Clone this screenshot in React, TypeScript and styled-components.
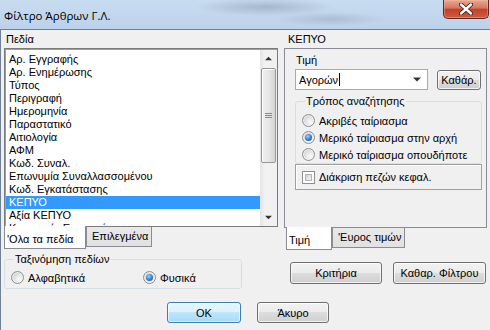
import React from "react";
import styled, { createGlobalStyle, css } from "styled-components";

const GlobalStyle = createGlobalStyle`
  html, body { margin: 0; padding: 0; }
  body {
    background: #f0f0f0;
    font-family: "Liberation Sans", Arial, sans-serif;
    font-size: 11px;
    color: #000;
  }
  * { box-sizing: border-box; }
`;

const Window = styled.div`
  width: 490px;
  height: 330px;
  overflow: hidden;
  display: flex;
  flex-direction: column;
  background: #f0f0f0;
`;

const TitleBar = styled.div`
  height: 29px;
  flex: none;
  display: flex;
  justify-content: space-between;
  align-items: flex-start;
  background:
    radial-gradient(ellipse 70px 9px at 265px 7px, rgba(95, 105, 120, 0.3), transparent),
    radial-gradient(ellipse 55px 7px at 330px 19px, rgba(95, 105, 120, 0.22), transparent),
    linear-gradient(#c8dcf1, #bcd2ea);
`;

const TitleText = styled.div`
  font-family: "Open Sans", "Noto Sans", sans-serif;
  font-size: 11.5px;
  line-height: 31px;
  padding-left: 4px;
  color: #000;
`;

const CloseButton = styled.div`
  width: 46px;
  height: 19px;
  margin-right: 1px;
  border: 1px solid #5a2a22;
  border-top: none;
  border-radius: 0 0 5px 5px;
  background: linear-gradient(#e8a892 0%, #d8745c 45%, #c2412a 52%, #cf5b3f 100%);
  box-shadow: inset 0 0 0 1px rgba(255, 200, 180, 0.35);
  display: flex;
  align-items: center;
  justify-content: center;
`;

const Client = styled.div`
  flex: 1;
  border-top: 1px solid #6f8195;
  border-left: 1px solid #6f8195;
  padding: 0 2px 0 3px;
  display: flex;
  flex-direction: column;
`;

const TopRow = styled.div`
  display: flex;
`;

const Column = styled.div<{ $width: number; $gap?: number }>`
  width: ${(p) => p.$width}px;
  margin-left: ${(p) => p.$gap ?? 0}px;
  display: flex;
  flex-direction: column;
`;

const PaneLabel = styled.div<{ $indent: number }>`
  height: 18px;
  line-height: 19px;
  padding-left: ${(p) => p.$indent}px;
`;

const ListBox = styled.div`
  height: 179px;
  border: 1px solid #7a7a7a;
  box-shadow: inset 1px 1px 0 #a0a0a0;
  background: #fff;
  display: flex;
`;

const Items = styled.div`
  flex: 1;
  padding: 4px 0 0 1px;
  overflow: hidden;
`;

const ListItem = styled.div<{ $selected?: boolean }>`
  height: 13px;
  line-height: 13px;
  padding-left: 3px;
  white-space: nowrap;
  ${(p) =>
    p.$selected &&
    css`
      background: #3399ff;
      color: #fff;
    `}
`;

const ScrollBar = styled.div`
  width: 17px;
  margin: 1px 0 0 0;
  background: linear-gradient(90deg, #e3e3e3, #f2f2f2 30%, #f0f0f0);
  display: flex;
  flex-direction: column;
  align-items: center;
`;

const ScrollArrow = styled.div`
  height: 17px;
  width: 17px;
  display: flex;
  align-items: center;
  justify-content: center;
`;

const ScrollThumb = styled.div`
  width: 15px;
  height: 95px;
  margin-top: 1px;
  border: 1px solid #979797;
  border-radius: 2px;
  background: linear-gradient(90deg, #f1f1f1, #e5e5e5 50%, #d6d6d6);
  box-shadow: inset 1px 1px 0 #fff;
  display: flex;
  align-items: center;
  justify-content: center;
`;

const ScrollTrack = styled.div`
  flex: 1;
`;

const TabStrip = styled.div<{ $indent?: number }>`
  display: flex;
  align-items: flex-start;
  padding-left: ${(p) => p.$indent ?? 0}px;
  margin-top: -1px;
`;

const Tab = styled.div<{ $active?: boolean; $width: number }>`
  width: ${(p) => p.$width}px;
  border: 1px solid #898c95;
  border-top: none;
  white-space: nowrap;
  ${(p) =>
    p.$active
      ? css`
          height: 23px;
          background: #fff;
          padding: 7px 0 0 2px;
        `
      : css`
          height: 20px;
          margin-top: 1px;
          background: linear-gradient(#e9e9e9, #e1e1e1);
          padding: 3px 0 0 5px;
        `}
`;

const Panel = styled.div`
  height: 180px;
  border: 1px solid #898c95;
  padding: 4px 4px 0 10px;
  display: flex;
  flex-direction: column;
`;

const FieldLabel = styled.div`
  height: 14px;
  line-height: 14px;
  padding-left: 1px;
`;

const ComboRow = styled.div`
  display: flex;
  align-items: center;
  gap: 9px;
  margin-top: 2px;
`;

const ComboBox = styled.div`
  width: 133px;
  height: 21px;
  border: 1px solid #7eb4ea;
  background: #fff;
  display: flex;
  align-items: center;
  padding: 0 6px 0 3px;
`;

const ComboText = styled.span`
  flex: 1;
  display: flex;
  align-items: center;
`;

const Caret = styled.span`
  display: inline-block;
  width: 1px;
  height: 13px;
  background: #000;
  margin-left: 1px;
`;

const Button = styled.div<{ $width: number; $height?: number; $primary?: boolean }>`
  width: ${(p) => p.$width}px;
  height: ${(p) => p.$height ?? 21}px;
  border-radius: 3px;
  display: flex;
  align-items: center;
  justify-content: center;
  white-space: nowrap;
  ${(p) =>
    p.$primary
      ? css`
          border: 1px solid #3c7fb1;
          background: linear-gradient(#eaf6fd 0%, #d9f0fc 49%, #bee6fd 50%, #a7d9f5 100%);
          box-shadow: inset 0 0 0 1px rgba(255, 255, 255, 0.6);
        `
      : css`
          border: 1px solid #707070;
          background: linear-gradient(#f2f2f2 0%, #ebebeb 49%, #dddddd 50%, #cfcfcf 100%);
          box-shadow: inset 0 0 0 1px rgba(255, 255, 255, 0.7);
        `}
`;

const GroupBox = styled.fieldset<{ $width: number; $top: number; $padTop: number; $padBottom: number }>`
  width: ${(p) => p.$width}px;
  margin: ${(p) => p.$top}px 0 0 0;
  padding: ${(p) => p.$padTop}px 0 ${(p) => p.$padBottom}px 6px;
  border: 1px solid #d5dfe5;
  border-radius: 3px;
  min-width: 0;
`;

const Legend = styled.legend`
  padding: 0 1px;
  margin-left: 3px;
  line-height: 13px;
`;

const OptionRow = styled.div`
  height: 17px;
  display: flex;
  align-items: center;
  gap: 4px;
  white-space: nowrap;
`;

const OptionGrid = styled.div<{ $cols: string }>`
  display: grid;
  grid-template-columns: ${(p) => p.$cols};
`;

const Radio = styled.span<{ $checked?: boolean }>`
  width: 13px;
  height: 13px;
  flex: none;
  border-radius: 50%;
  border: 1px solid #8e8f8f;
  background: radial-gradient(circle at 65% 65%, #fbfbfb, #d4d4d4 70%, #c6c6c6);
  box-shadow: inset 0 0 0 1px rgba(255, 255, 255, 0.6);
  position: relative;
  ${(p) =>
    p.$checked &&
    css`
      &::after {
        content: "";
        position: absolute;
        left: 2px;
        top: 2px;
        width: 7px;
        height: 7px;
        border-radius: 50%;
        background: radial-gradient(circle at 40% 35%, #9fd2fb, #2d7cc9 55%, #0f4486);
      }
    `}
`;

const CheckFrame = styled.div<{ $width: number }>`
  width: ${(p) => p.$width}px;
  height: 26px;
  border: 1px solid #a0a0a0;
  box-shadow: inset 1px 1px 0 #fff;
  display: flex;
  align-items: center;
  gap: 4px;
  padding-left: 6px;
`;

const CheckBox = styled.span`
  width: 13px;
  height: 13px;
  border: 1px solid #8e8f8f;
  background: #fff;
  padding: 2px;
  display: flex;
  &::after {
    content: "";
    flex: 1;
    border: 1px solid #aeb3b9;
    background: linear-gradient(135deg, #cbcfd5, #f6f6f6);
  }
`;

const BottomRow = styled.div`
  display: flex;
  align-items: flex-start;
`;

const ButtonPair = styled.div<{ $gap: number; $left: number; $top: number }>`
  display: flex;
  gap: ${(p) => p.$gap}px;
  margin-left: ${(p) => p.$left}px;
  margin-top: ${(p) => p.$top}px;
`;

const Triangle = ({ up, size = 7 }: { up?: boolean; size?: number }) => (
  <svg width={size} height={Math.ceil(size / 2) + 1} viewBox="0 0 8 5">
    <path d={up ? "M0 4.5 L4 0.5 L8 4.5 Z" : "M0 0.5 L8 0.5 L4 4.5 Z"} fill="#333" />
  </svg>
);

const fields = [
  "Αρ. Εγγραφής",
  "Αρ. Ενημέρωσης",
  "Τύπος",
  "Περιγραφή",
  "Ημερομηνία",
  "Παραστατικό",
  "Αιτιολογία",
  "ΑΦΜ",
  "Κωδ. Συναλ.",
  "Επωνυμία Συναλλασσομένου",
  "Κωδ. Εγκατάστασης",
  "ΚΕΠΥΟ",
  "Αξία ΚΕΠΥΟ",
  "Κατηγορία Εγγραφής",
];

export default function App() {
  return (
    <>
      <GlobalStyle />
      <Window>
        <TitleBar>
          <TitleText>Φίλτρο Άρθρων Γ.Λ.</TitleText>
          <CloseButton>
            <svg width="14" height="12" viewBox="0 0 14 12">
              <path
                d="M2 1.5 L12 10.5 M12 1.5 L2 10.5"
                stroke="#3a1c18"
                strokeWidth="4.2"
                strokeLinecap="round"
              />
              <path
                d="M2 1.5 L12 10.5 M12 1.5 L2 10.5"
                stroke="#fff"
                strokeWidth="2.4"
                strokeLinecap="round"
              />
            </svg>
          </CloseButton>
        </TitleBar>

        <Client>
          <TopRow>
            <Column $width={274}>
              <PaneLabel $indent={2}>Πεδία</PaneLabel>
              <ListBox>
                <Items>
                  {fields.map((f) => (
                    <ListItem key={f} $selected={f === "ΚΕΠΥΟ"}>
                      {f}
                    </ListItem>
                  ))}
                </Items>
                <ScrollBar>
                  <ScrollArrow>
                    <Triangle up />
                  </ScrollArrow>
                  <ScrollThumb>
                    <svg width="7" height="6" viewBox="0 0 7 6">
                      <path d="M0 0.5 H7 M0 2.5 H7 M0 4.5 H7" stroke="#8a8a8a" />
                    </svg>
                  </ScrollThumb>
                  <ScrollTrack />
                  <ScrollArrow>
                    <Triangle />
                  </ScrollArrow>
                </ScrollBar>
              </ListBox>
              <TabStrip>
                <Tab $active $width={82}>
                  'Ολα τα πεδία
                </Tab>
                <Tab $width={66}>Επιλεγμένα</Tab>
              </TabStrip>
            </Column>

            <Column $width={203} $gap={6}>
              <PaneLabel $indent={4}>ΚΕΠΥΟ</PaneLabel>
              <Panel>
                <FieldLabel>Τιμή</FieldLabel>
                <ComboRow>
                  <ComboBox>
                    <ComboText>
                      Αγορών
                      <Caret />
                    </ComboText>
                    <Triangle size={8} />
                  </ComboBox>
                  <Button $width={44} $height={20}>
                    Καθάρ.
                  </Button>
                </ComboRow>
                <GroupBox $width={187} $top={5} $padTop={4} $padBottom={0}>
                  <Legend>Τρόπος αναζήτησης</Legend>
                  <OptionRow>
                    <Radio />
                    Ακριβές ταίριασμα
                  </OptionRow>
                  <OptionRow>
                    <Radio $checked />
                    Μερικό ταίριασμα στην αρχή
                  </OptionRow>
                  <OptionRow>
                    <Radio />
                    Μερικό ταίριασμα οπουδήποτε
                  </OptionRow>
                </GroupBox>
                <CheckFrame $width={187}>
                  <CheckBox />
                  Διάκριση πεζών κεφαλ.
                </CheckFrame>
              </Panel>
              <TabStrip $indent={2}>
                <Tab $active $width={46}>
                  Τιμή
                </Tab>
                <Tab $width={73}>'Ευρος τιμών</Tab>
              </TabStrip>
            </Column>
          </TopRow>

          <BottomRow>
            <GroupBox $width={238} $top={3} $padTop={3} $padBottom={2}>
              <Legend>Ταξινόμηση πεδίων</Legend>
              <OptionGrid $cols="132px 1fr">
                <OptionRow>
                  <Radio />
                  Αλφαβητικά
                </OptionRow>
                <OptionRow>
                  <Radio $checked />
                  Φυσικά
                </OptionRow>
              </OptionGrid>
            </GroupBox>
            <ButtonPair $gap={11} $left={48} $top={12}>
              <Button $width={92} $height={22}>
                Κριτήρια
              </Button>
              <Button $width={93} $height={22}>
                Καθαρ. Φίλτρου
              </Button>
            </ButtonPair>
          </BottomRow>

          <ButtonPair $gap={16} $left={163} $top={13}>
            <Button $width={74} $primary>
              OK
            </Button>
            <Button $width={72}>Άκυρο</Button>
          </ButtonPair>
        </Client>
      </Window>
    </>
  );
}
